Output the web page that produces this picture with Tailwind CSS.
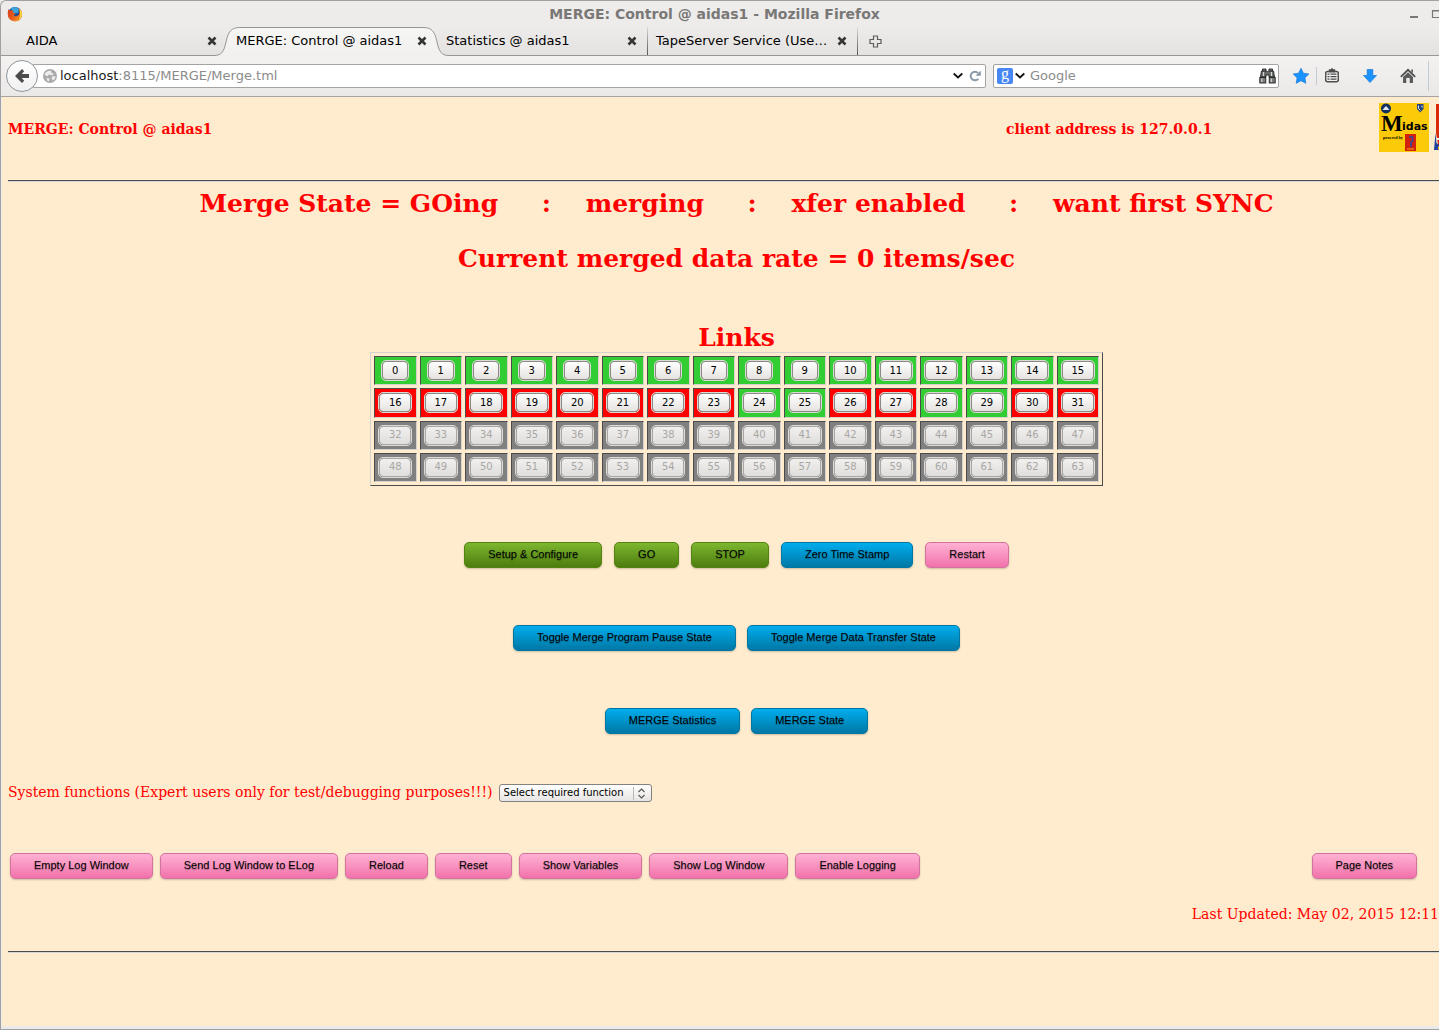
<!DOCTYPE html>
<html lang="en">
<head>
<meta charset="utf-8">
<title>MERGE: Control @ aidas1</title>
<script src="https://cdn.jsdelivr.net/npm/@tailwindcss/browser@4"></script>
</head>
<body class="bg-[#edeceb]">
<div class="min-h-screen flex flex-col overflow-hidden border-l border-t border-b border-[#a09fa1] rounded-tl-md bg-[#edeceb] font-['DejaVu_Sans',sans-serif]">

  <!-- Title bar -->
  <header class="h-[26px] flex items-center pl-1.5 shrink-0">
    <svg class="w-4 h-4 shrink-0" viewBox="0 0 16 16" aria-hidden="true">
      <defs><linearGradient id="fx" x1="0" y1="0" x2="1" y2="1"><stop offset="0" stop-color="#d8381c"/><stop offset=".55" stop-color="#e9601c"/><stop offset="1" stop-color="#f9b62b"/></linearGradient></defs>
      <circle cx="8" cy="8" r="7" fill="#1d4f94"/>
      <path d="M4 2.500Q8 -.5 12 3L11 7 6 7Z" fill="#3aa5dc"/>
      <path d="M1.400 3.200L3 4.600Q4 4 6 4.600L6.500 5.200Q5 6.500 6.500 7L8.500 7.200Q8 8.600 6.500 9Q8 11 11 9.500Q12.800 8 12.400 4.500L11.500 2.200Q15.400 4.500 15.200 8.500Q14.500 15.200 8 15.400Q1 15 .8 8.500Q.6 5.500 1.400 3.200Z" fill="url(#fx)"/>
      <path d="M12.300 2.800Q15.200 5 14.900 9Q14 12.500 12 13.500Q14 9 12.300 2.800Z" fill="#fbdc3c"/>
    </svg>
    <h1 class="flex-1 text-center text-sm leading-4 font-bold text-[#797876] pr-1">MERGE: Control @ aidas1 - Mozilla Firefox</h1>
    <button class="w-[9px] h-3.5 shrink-0" aria-label="Minimize"><svg class="w-[9px] h-3.5" viewBox="0 0 9 14"><path d="M0 10h8" stroke="#797876" stroke-width="2"/></svg></button>
    <button class="w-2 h-3.5 shrink-0 ml-3 overflow-hidden" aria-label="Maximize"><svg class="w-3 h-3.5 max-w-none" viewBox="0 0 12 14"><path d="M1.500 3.500h9v7h-9zM1 4h11" fill="none" stroke="#797876" stroke-width="1.200"/></svg></button>
  </header>

  <!-- Tab strip -->
  <nav class="h-[29px] flex shrink-0 pl-[15px] border-b border-[#979694] bg-linear-to-b from-[#edeceb] to-[#e3e2e0] text-[13px] text-black" aria-label="Tabs">
    <div class="w-[210px] shrink-0 flex items-center pl-2.5 pr-[9px]">
      <a href="#" class="flex-1">AIDA</a>
      <button aria-label="Close AIDA"><svg class="w-2.5 h-2.5" viewBox="0 0 10 10"><path d="M1.500 1.500l7 7M8.500 1.500l-7 7" stroke="#353535" stroke-width="2.600"/></svg></button>
    </div>
    <div class="w-[210px] shrink-0 flex items-center pl-2.5 pr-[9px] relative">
      <svg class="absolute left-[-12px] top-0 w-[236px] h-[30px] max-w-none" viewBox="0 0 236 30" aria-hidden="true">
        <defs><linearGradient id="tab" x1="0" y1="0" x2="0" y2="1"><stop offset="0" stop-color="#f6f6f5"/><stop offset="1" stop-color="#f1f0ef"/></linearGradient></defs>
        <path d="M0 30V28.500C8 28.500 10 24 12 15C14 5 17 .5 26 .5H209C218 .5 221 5 223 15C225 24 227 28.500 235 28.500V30Z" fill="url(#tab)"/>
        <path d="M0 28.500C8 28.500 10 24 12 15C14 5 17 .5 26 .5H209C218 .5 221 5 223 15C225 24 227 28.500 235 28.500" fill="none" stroke="#979694"/>
      </svg>
      <a href="#" class="flex-1 relative" aria-current="page">MERGE: Control @ aidas1</a>
      <button class="relative" aria-label="Close MERGE: Control"><svg class="w-2.5 h-2.5" viewBox="0 0 10 10"><path d="M1.500 1.500l7 7M8.500 1.500l-7 7" stroke="#353535" stroke-width="2.600"/></svg></button>
    </div>
    <div class="w-[211px] shrink-0 flex items-center px-2.5">
      <a href="#" class="flex-1">Statistics @ aidas1</a>
      <button aria-label="Close Statistics"><svg class="w-2.5 h-2.5" viewBox="0 0 10 10"><path d="M1.500 1.500l7 7M8.500 1.500l-7 7" stroke="#353535" stroke-width="2.600"/></svg></button>
    </div>
    <div class="w-px bg-linear-to-b from-[#dddcda] to-[#555]"></div>
    <div class="w-[209px] shrink-0 flex items-center pl-2 pr-2.5">
      <a href="#" class="flex-1">TapeServer Service (Use…</a>
      <button aria-label="Close TapeServer Service"><svg class="w-2.5 h-2.5" viewBox="0 0 10 10"><path d="M1.500 1.500l7 7M8.500 1.500l-7 7" stroke="#353535" stroke-width="2.600"/></svg></button>
    </div>
    <div class="w-px bg-linear-to-b from-[#dddcda] to-[#555]"></div>
    <button class="ml-[11px]" aria-label="New tab"><svg class="w-[13px] h-[13px]" viewBox="0 0 13 13"><path d="M4.500 1h4v3.500h3.500v4h-3.500v3.500h-4v-3.500h-3.500v-4h3.500z" fill="#e8e7e5" stroke="#5c5c5a" stroke-width="1.200"/></svg></button>
  </nav>

  <!-- Navigation toolbar -->
  <div class="h-[41px] shrink-0 flex items-center pl-[5px] pr-2.5 border-b border-[#a5a4a2] bg-linear-to-b from-[#f3f2f1] to-[#eae9e8] text-[13px]">
    <button class="relative z-10 w-8 h-8 shrink-0 rounded-full border border-[#8f969e] bg-linear-to-b from-white to-[#f0f0f0] flex items-center justify-center" aria-label="Back">
      <svg class="w-4 h-4" viewBox="0 0 16 16"><path d="M1 8L8 1L10.200 3.200L7.700 6H15V10H7.700L10.200 12.800L8 15Z" fill="#4b4b4b"/></svg>
    </button>
    <div class="flex-1 h-6 -ml-[5px] flex items-center bg-white border border-[#a5a4a2] rounded-r-xs pl-[9px] pr-1">
      <svg class="w-3.5 h-3.5 shrink-0" viewBox="0 0 14 14"><circle cx="7" cy="7" r="7" fill="#a9a9a9"/><path d="M5 2L8 1.500L8.500 4L11 4.500L9 6.500L6 5.500L4.500 7.500L2 6L1.500 4.500ZM9 7.500L12.500 7L12 10L10 11.500L8.500 9.500ZM3.500 9L6.500 9.500L6 12.500L4.500 12Z" fill="#ececec"/></svg>
      <div role="textbox" aria-label="Address" class="flex-1 ml-[3px] text-[#8b8b8b] whitespace-nowrap"><span class="text-[#1c1c1c]">localhost</span>:8115/MERGE/Merge.tml</div>
      <button aria-label="History"><svg class="w-2.5 h-2" viewBox="0 0 10 8"><path d="M.7 1.500L5 5.500L9.300 1.500" fill="none" stroke="#111" stroke-width="1.800"/></svg></button>
      <button class="ml-1.5" aria-label="Reload page"><svg class="w-3 h-3" viewBox="0 0 12 12"><path d="M9.300 8.800A4.300 4.300 0 1 1 9 3" fill="none" stroke="#8a9aa8" stroke-width="2"/><path d="M11.800 .5V5.800H6.500Z" fill="#8a9aa8"/></svg></button>
    </div>
    <div class="w-[286px] h-6 ml-[7px] shrink-0 flex items-center bg-white border border-[#a5a4a2] rounded-xs pl-[3px] pr-0.5">
      <div class="w-4 h-4 rounded-xs bg-[#4687f3] text-white text-base leading-3 text-center font-['Liberation_Serif',serif] shrink-0">g</div>
      <svg class="w-2.5 h-2 ml-0.5 shrink-0" viewBox="0 0 10 8"><path d="M.7 1.500L5 5.500L9.300 1.500" fill="none" stroke="#111" stroke-width="1.800"/></svg>
      <input aria-label="Search" placeholder="Google" class="flex-1 min-w-0 ml-[5px] outline-none placeholder:text-[#8b8b8b]">
      <button aria-label="Go"><svg class="w-[17px] h-4" viewBox="0 0 17 16"><path d="M3.500 3V1H7V3M10 3V1H13.500V3" fill="#777c77" stroke="#222" stroke-width=".9"/><path d="M2.500 3H7.500L8.500 4L9.500 3H14.500L15.500 9H10V7H7V9H1.500Z" fill="#666b66" stroke="#222" stroke-width=".9"/><rect x=".8" y="9.500" width="6" height="5.500" fill="#777c77" stroke="#222" stroke-width=".9"/><rect x="10.200" y="9.500" width="6" height="5.500" fill="#777c77" stroke="#222" stroke-width=".9"/><path d="M4.500 4v4M12.500 4v4M2.800 10.500v3.500M12.300 10.500v3.500" stroke="#d5d8d5" stroke-width="1.200"/></svg></button>
    </div>
    <button class="ml-3.5" aria-label="Bookmark"><svg class="w-4 h-4" viewBox="0 0 16 16"><path d="M8 .3L10.400 5.200L15.800 6L11.900 9.800L12.800 15.300L8 12.700L3.200 15.300L4.100 9.800L.2 6L5.600 5.200Z" fill="#1a93ff" stroke="#1579d8" stroke-width=".7"/></svg></button>
    <div class="w-px h-[18px] ml-[7px] bg-[#c4cbd2]"></div>
    <button class="ml-2" aria-label="Bookmarks list"><svg class="w-3.5 h-4" viewBox="0 0 14 16"><path d="M2.500 3.500H4.500V2.300H6L7 1L8 2.300H9.500V3.500H11.500Q13.300 3.500 13.300 5V12Q13.300 13.700 11.500 13.700H2.500Q.7 13.700 .7 12V5Q.7 3.500 2.500 3.500Z" fill="#f2f2f2" stroke="#4c4c4c" stroke-width="1.500"/><path d="M4 3h6" stroke="#4c4c4c" stroke-width="3"/><path d="M2.500 6.200h2M5.500 6.200h6M2.500 8.700h2M5.500 8.700h6M2.500 11.200h2M5.500 11.200h6" stroke="#4c4c4c" stroke-width="1.300"/></svg></button>
    <button class="ml-6" aria-label="Downloads"><svg class="w-3.5 h-3.5" viewBox="0 0 14 14"><path d="M4.200 .5H9.800V6.500H13.500L7 13.600L.5 6.500H4.200Z" fill="#1a93ff" stroke="#1579d8" stroke-width=".7"/></svg></button>
    <button class="ml-[23px]" aria-label="Home"><svg class="w-4 h-4" viewBox="0 0 16 16"><path d="M.8 8.800L8 1.800L15.200 8.800" fill="none" stroke="#4e4e4e" stroke-width="1.800"/><path d="M3 9L8 4.300L13 9V15H9.700V10H6.300V15H3ZM11.300 1.500H13V5L11.300 3.500Z" fill="#5c5c5c"/></svg></button>
    <div class="w-px h-[30px] ml-3 bg-[#c4cbd2]"></div>
  </div>

  <!-- Page -->
  <main class="flex-1 border-b-[3px] border-[#eaeaea] bg-[#ffebcd] overflow-hidden ml-px pl-1.5 text-sm text-[#f00] font-['DejaVu_Serif',serif]">
    <div class="-mr-[26px]">
      <div class="flex pt-1.5 h-[83px] font-bold">
        <h2 class="flex-1 pt-4">MERGE: Control @ aidas1</h2>
        <p class="pt-4 w-[373px]">client address is 127.0.0.1</p>
        <a href="#" class="shrink-0" aria-label="Midas">
          <svg class="w-[50px] h-[49px]" viewBox="0 0 50 49"><rect width="50" height="49" fill="#fbca08"/><circle cx="7" cy="5.500" r="5" fill="#12305e"/><path d="M3.500 7L5.500 4.500L7 3L8.500 4.500L10.500 7Z" fill="#dfe8f3"/><path d="M38 1h6.500v5L41.200 9.500L38 6Z" fill="#24427e"/><path d="M39.500 2.500v3l2 2M43 2.500v2" fill="none" stroke="#dfe8f3"/><text x="2" y="28" font-family="Liberation Serif" font-weight="bold" font-size="23">M</text><text x="23" y="27" font-family="DejaVu Sans" font-weight="bold" font-size="11">idas</text><text x="4" y="36" font-family="Liberation Serif" font-weight="bold" font-size="4">powered by</text><rect x="26" y="31" width="11" height="17" fill="#d3210d"/><path d="M30 34h3.500v4l-1.500 1v5" fill="none" stroke="#31499c" stroke-width="1.600"/><path d="M28 46h7" stroke="#f4b019"/></svg>
        </a>
        <a href="#" class="shrink-0 ml-[5px] w-[31px]" aria-label="TclHttpd">
          <svg class="w-[31px] h-[49px]" viewBox="0 0 31 49"><path d="M2 1H28L31 47H5L2 30Z" fill="#d92b0c"/><path d="M0 47L1.500 30L2.500 40L5 42V47Z" fill="#1e3f9d"/><path d="M3 36h9" stroke="#fff" stroke-width="2"/><path d="M4 45h8" stroke="#f4b019" stroke-width="3"/></svg>
        </a>
      </div>
      <hr class="border-t border-[#4b4b4b] border-b border-b-[#d6d6d4]">

      <div class="text-center font-bold text-[25px] leading-[30px]">
        <p class="mt-[7px] whitespace-pre">Merge State = GOing     :    merging     :    xfer enabled     :    want first SYNC</p>
        <p class="mt-[25px]">Current merged data rate = 0 items/sec</p>
        <h2 class="mt-[49px] -mb-px" id="links-title">Links</h2>
      </div>

      <table aria-labelledby="links-title" class="mx-auto w-[733px] h-[134px] table-fixed border-separate border-spacing-[3px] border border-t-[#d6d3ce] border-l-[#d6d3ce] border-r-[#4b4b4b] border-b-[#4b4b4b] font-['DejaVu_Sans',sans-serif] text-[10px]">
        <tbody id="links"></tbody>
      </table>

      <div class="text-black font-['Liberation_Sans',sans-serif] text-[11px] [&_button]:h-[26px] [&_button]:px-[23px] [&_button]:border [&_button]:rounded-[5px] [&_button]:bg-linear-to-b [&_button]:pb-px [&_button]:whitespace-nowrap [&_button]:[box-shadow:0_1px_2px_rgba(0,0,0,.2)] [&_button]:[text-shadow:0_1px_1px_rgba(0,0,0,.3)]">
        <div class="flex justify-center gap-3 mt-14">
          <button class="from-[#7db72f] to-[#4e7d0e] border-[#538312]">Setup &amp; Configure</button>
          <button class="from-[#7db72f] to-[#4e7d0e] border-[#538312]">GO</button>
          <button class="from-[#7db72f] to-[#4e7d0e] border-[#538312]">STOP</button>
          <button class="from-[#00adee] to-[#0078a5] border-[#0076a3]">Zero Time Stamp</button>
          <button class="from-[#feb1d3] to-[#f171ab] border-[#d2729e]">Restart</button>
        </div>
        <div class="flex justify-center gap-[11px] mt-[57px]">
          <button class="from-[#00adee] to-[#0078a5] border-[#0076a3]">Toggle Merge Program Pause State</button>
          <button class="from-[#00adee] to-[#0078a5] border-[#0076a3]">Toggle Merge Data Transfer State</button>
        </div>
        <div class="flex justify-center gap-[11px] mt-[57px]">
          <button class="from-[#00adee] to-[#0078a5] border-[#0076a3]">MERGE Statistics</button>
          <button class="from-[#00adee] to-[#0078a5] border-[#0076a3]">MERGE State</button>
        </div>
        <div class="flex items-end gap-1.5 mt-12 text-[#f00]">
          <label for="fn" class="text-sm font-['DejaVu_Serif',serif]">System functions (Expert users only for test/debugging purposes!!!)</label>
          <div class="relative">
            <select id="fn" class="appearance-none block w-[153px] h-[18px] pl-1 border border-[#85827e] rounded-[3px] bg-linear-to-b from-white to-[#e6e5e3] text-black text-[10px] leading-4 font-['DejaVu_Sans',sans-serif]"><option>Select required function</option></select>
            <svg class="absolute right-[5px] top-[3px] w-3.5 h-[13px] pointer-events-none" viewBox="0 0 14 13"><path d="M.5 0V13" stroke="#bab8b5"/><path d="M5.500 5L8.500 2L11.500 5M5.500 8L8.500 11L11.500 8" fill="none" stroke="#555" stroke-width="1.100"/></svg>
          </div>
        </div>
        <div class="flex gap-[7px] mt-[51px] pl-0.5 pr-12">
          <button class="from-[#feb1d3] to-[#f171ab] border-[#d2729e]">Empty Log Window</button>
          <button class="from-[#feb1d3] to-[#f171ab] border-[#d2729e]">Send Log Window to ELog</button>
          <button class="from-[#feb1d3] to-[#f171ab] border-[#d2729e]">Reload</button>
          <button class="from-[#feb1d3] to-[#f171ab] border-[#d2729e]">Reset</button>
          <button class="from-[#feb1d3] to-[#f171ab] border-[#d2729e]">Show Variables</button>
          <button class="from-[#feb1d3] to-[#f171ab] border-[#d2729e]">Show Log Window</button>
          <button class="from-[#feb1d3] to-[#f171ab] border-[#d2729e]">Enable Logging</button>
          <button class="ml-auto from-[#feb1d3] to-[#f171ab] border-[#d2729e]">Page Notes</button>
        </div>
      </div>
      <p class="mt-[25px] pr-[26px] text-right whitespace-nowrap">Last Updated: May 02, 2015 12:11</p>
      <hr class="mt-[27px] border-t border-[#4b4b4b] border-b border-b-[#d6d6d4]">
    </div>
  </main>
</div>
<script>
  // Link states: g = enabled, r = waiting, x = absent
  const states = 'gggggggggggggggg' + 'rrrrrrrrggrrggrr' + 'x'.repeat(32);
  const cellColour = { g: 'bg-[#32cd32]', r: 'bg-[#ff0000]', x: 'bg-[#808080]' };
  const body = document.getElementById('links');
  for (let r = 0; r < 4; r++) {
    const tr = body.insertRow();
    for (let c = 0; c < 16; c++) {
      const n = r * 16 + c, s = states[n], td = tr.insertCell();
      td.className = 'p-0 text-center align-middle border border-t-[#4b4b4b] border-l-[#4b4b4b] border-r-[#d6d3ce] border-b-[#d6d3ce] ' + cellColour[s];
      const b = document.createElement('button');
      b.textContent = n;
      b.disabled = s === 'x';
      b.className = 'block mx-auto h-[19px] rounded-[4px] border bg-linear-to-b leading-4 outline outline-[#dcdad6] ' +
        (n < 10 ? 'w-[26px] ' : 'w-8 ') +
        (s === 'x' ? 'border-[#aaa7a3] from-[#f1f0ef] to-[#dfdedc] text-[#a9a7a4]' : 'border-[#8c8984] from-white to-[#e4e3e0] text-black');
      td.append(b);
    }
  }
</script>
</body>
</html>
